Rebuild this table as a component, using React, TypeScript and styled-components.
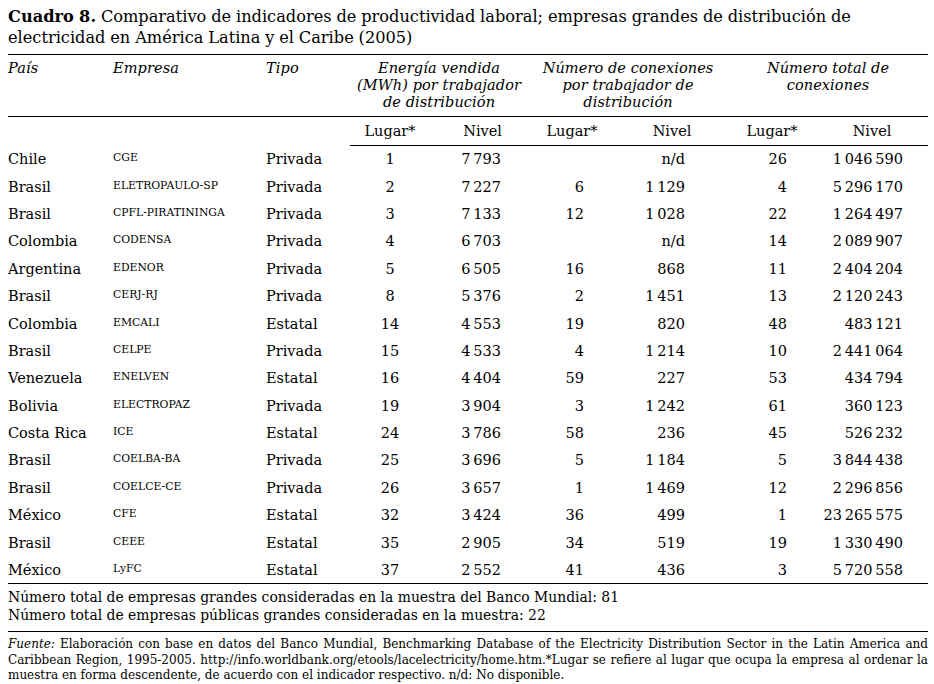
import styled, { createGlobalStyle } from "styled-components";

const GlobalStyle = createGlobalStyle`
  html, body {
    margin: 0;
    padding: 0;
    background: #ffffff;
  }
  body {
    font-family: "DejaVu Serif", "Liberation Serif", serif;
    color: #000;
  }
`;

type Row = {
  pais: string;
  empresa: string;
  tipo: string;
  l1: string;
  n1: string;
  l2: string;
  n2: string;
  l3: string;
  n3: string;
};

const t = (s: string) => s.replace(/ /g, "\u2009");

const rows: Row[] = [
  { pais: "Chile", empresa: "CGE", tipo: "Privada", l1: "1", n1: "7 793", l2: "", n2: "n/d", l3: "26", n3: "1 046 590" },
  { pais: "Brasil", empresa: "ELETROPAULO-SP", tipo: "Privada", l1: "2", n1: "7 227", l2: "6", n2: "1 129", l3: "4", n3: "5 296 170" },
  { pais: "Brasil", empresa: "CPFL-PIRATININGA", tipo: "Privada", l1: "3", n1: "7 133", l2: "12", n2: "1 028", l3: "22", n3: "1 264 497" },
  { pais: "Colombia", empresa: "CODENSA", tipo: "Privada", l1: "4", n1: "6 703", l2: "", n2: "n/d", l3: "14", n3: "2 089 907" },
  { pais: "Argentina", empresa: "EDENOR", tipo: "Privada", l1: "5", n1: "6 505", l2: "16", n2: "868", l3: "11", n3: "2 404 204" },
  { pais: "Brasil", empresa: "CERJ-RJ", tipo: "Privada", l1: "8", n1: "5 376", l2: "2", n2: "1 451", l3: "13", n3: "2 120 243" },
  { pais: "Colombia", empresa: "EMCALI", tipo: "Estatal", l1: "14", n1: "4 553", l2: "19", n2: "820", l3: "48", n3: "483 121" },
  { pais: "Brasil", empresa: "CELPE", tipo: "Privada", l1: "15", n1: "4 533", l2: "4", n2: "1 214", l3: "10", n3: "2 441 064" },
  { pais: "Venezuela", empresa: "ENELVEN", tipo: "Estatal", l1: "16", n1: "4 404", l2: "59", n2: "227", l3: "53", n3: "434 794" },
  { pais: "Bolivia", empresa: "ELECTROPAZ", tipo: "Privada", l1: "19", n1: "3 904", l2: "3", n2: "1 242", l3: "61", n3: "360 123" },
  { pais: "Costa Rica", empresa: "ICE", tipo: "Estatal", l1: "24", n1: "3 786", l2: "58", n2: "236", l3: "45", n3: "526 232" },
  { pais: "Brasil", empresa: "COELBA-BA", tipo: "Privada", l1: "25", n1: "3 696", l2: "5", n2: "1 184", l3: "5", n3: "3 844 438" },
  { pais: "Brasil", empresa: "COELCE-CE", tipo: "Privada", l1: "26", n1: "3 657", l2: "1", n2: "1 469", l3: "12", n3: "2 296 856" },
  { pais: "México", empresa: "CFE", tipo: "Estatal", l1: "32", n1: "3 424", l2: "36", n2: "499", l3: "1", n3: "23 265 575" },
  { pais: "Brasil", empresa: "CEEE", tipo: "Estatal", l1: "35", n1: "2 905", l2: "34", n2: "519", l3: "19", n3: "1 330 490" },
  { pais: "México", empresa: "LyFC", tipo: "Estatal", l1: "37", n1: "2 552", l2: "41", n2: "436", l3: "3", n3: "5 720 558" },
];

// column widths in px, left to right
const widths = [105, 153, 84, 80, 98, 88, 112, 88, 112];

export default function App() {
  return (
    <>
      <GlobalStyle />
      <Page>
        <Title>
          <TitleLine>
            <strong>Cuadro 8.</strong> Comparativo de indicadores de productividad laboral; empresas grandes
            de distribución de
          </TitleLine>
          <TitleLine>electricidad en América Latina y el Caribe (2005)</TitleLine>
        </Title>

        <Table>
          <colgroup>
            {widths.map((w, i) => (
              <col key={i} style={{ width: w }} />
            ))}
          </colgroup>
          <thead>
            <HeadRow>
              <HeadCell>País</HeadCell>
              <HeadCell>Empresa</HeadCell>
              <HeadCell>Tipo</HeadCell>
              <GroupCell colSpan={2}>
                Energía vendida
                <br />
                (MWh) por trabajador
                <br />
                de distribución
              </GroupCell>
              <GroupCell colSpan={2}>
                Número de conexiones
                <br />
                por trabajador de
                <br />
                distribución
              </GroupCell>
              <GroupCell colSpan={2}>
                Número total de
                <br />
                conexiones
              </GroupCell>
            </HeadRow>
            <SubRow>
              <SubCell $ruled={false} />
              <SubCell $ruled={false} />
              <SubCell $ruled={false} />
              <SubCell $ruled>Lugar*</SubCell>
              <SubCell $ruled $align="right" $pr={26}>Nivel</SubCell>
              <SubCell $ruled>Lugar*</SubCell>
              <SubCell $ruled>Nivel</SubCell>
              <SubCell $ruled>Lugar*</SubCell>
              <SubCell $ruled>Nivel</SubCell>
            </SubRow>
          </thead>
          <tbody>
            {rows.map((r, i) => (
              <BodyRow key={i}>
                <Cell>{r.pais}</Cell>
                <Cell>
                  <Company>{r.empresa}</Company>
                </Cell>
                <Cell>{r.tipo}</Cell>
                <Cell $align="center">{r.l1}</Cell>
                <Cell $align="right" $pr={27}>{t(r.n1)}</Cell>
                <Cell $align="right" $pr={32}>{r.l2}</Cell>
                <Cell $align="right" $pr={43}>{t(r.n2)}</Cell>
                <Cell $align="right" $pr={29}>{r.l3}</Cell>
                <Cell $align="right" $pr={25}>{t(r.n3)}</Cell>
              </BodyRow>
            ))}
          </tbody>
        </Table>

        <Notes>
          <p>Número total de empresas grandes consideradas en la muestra del Banco Mundial: 81</p>
          <p>Número total de empresas públicas grandes consideradas en la muestra: 22</p>
        </Notes>

        <Source>
          <SourceLine $justify>
            <em>Fuente:</em> Elaboración con base en datos del Banco Mundial, Benchmarking Database of the
            Electricity Distribution Sector in the Latin America and
          </SourceLine>
          <SourceLine $justify>
            Caribbean Region, 1995-2005. http://info.worldbank.org/etools/lacelectricity/home.htm.*Lugar se
            refiere al lugar que ocupa la empresa al ordenar la
          </SourceLine>
          <SourceLine>
            muestra en forma descendente, de acuerdo con el indicador respectivo. n/d: No disponible.
          </SourceLine>
        </Source>
      </Page>
    </>
  );
}

const Page = styled.div`
  width: 920px;
  padding: 6px 6px 0 8px;
`;

const Title = styled.h1`
  margin: 0 0 6px;
  font-size: 16.2px;
  font-weight: normal;
  line-height: 21px;
  word-spacing: -0.3px;

  strong {
    font-weight: bold;
  }
`;

const TitleLine = styled.span`
  display: block;
  white-space: nowrap;
`;

const Table = styled.table`
  width: 920px;
  table-layout: fixed;
  border-collapse: collapse;
  border-top: 1px solid #000;
  border-bottom: 1px solid #000;
  font-size: 14.5px;
`;

const HeadRow = styled.tr`
  border-bottom: 1px solid #000;
`;

const HeadCell = styled.th`
  padding: 5px 0 5px;
  font-style: italic;
  font-weight: normal;
  text-align: left;
  vertical-align: top;
  line-height: 17px;
  letter-spacing: 0.1px;
`;

const GroupCell = styled(HeadCell)`
  text-align: center;
`;

const SubRow = styled.tr``;

const SubCell = styled.th<{ $ruled: boolean; $align?: string; $pr?: number }>`
  height: 28px;
  padding: 0 ${({ $pr }) => $pr ?? 0}px 0 0;
  font-weight: normal;
  text-align: ${({ $align }) => $align ?? "center"};
  border-bottom: ${({ $ruled }) => ($ruled ? "1px solid #000" : "none")};
`;

const BodyRow = styled.tr`
  height: 27.4px;
`;

const Cell = styled.td<{ $align?: string; $pr?: number }>`
  padding: 0 ${({ $pr }) => $pr ?? 0}px 0 0;
  text-align: ${({ $align }) => $align ?? "left"};
  white-space: nowrap;
  line-height: 18px;
`;

const Company = styled.span`
  font-size: 10.8px;
  vertical-align: 4px;
`;

const Notes = styled.div`
  padding: 4px 0 7px;
  border-bottom: 1px solid #000;
  font-size: 13.9px;
  line-height: 18px;

  p {
    margin: 0;
  }
`;

const Source = styled.div`
  margin: 5px 0 0;
  font-size: 12px;
  line-height: 15.5px;

  em {
    font-style: italic;
  }
`;

const SourceLine = styled.span<{ $justify?: boolean }>`
  display: block;
  white-space: nowrap;
  text-align: ${({ $justify }) => ($justify ? "justify" : "left")};
  text-align-last: ${({ $justify }) => ($justify ? "justify" : "left")};
  white-space: ${({ $justify }) => ($justify ? "normal" : "nowrap")};
`;
